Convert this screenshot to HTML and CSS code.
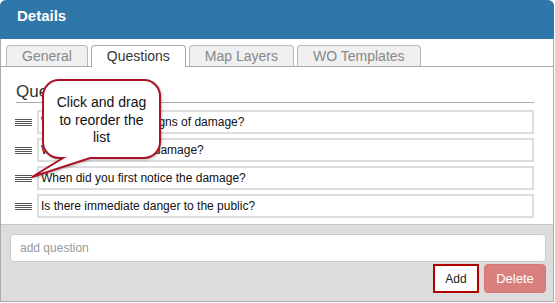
FILE: index.html
```html
<!DOCTYPE html>
<html lang="en">
<head>
    <meta charset="UTF-8">
    <meta name="viewport" content="width=device-width, initial-scale=1.0">
    <title>Details</title>
    <link rel="stylesheet" href="styles.css">
</head>
<body>
    <div class="panel">
        <div class="panel-header">Details</div>

        <div class="tabs">
            <div class="tab">General</div>
            <div class="tab active">Questions</div>
            <div class="tab">Map Layers</div>
            <div class="tab">WO Templates</div>
        </div>

        <div class="panel-body">
            <h3 class="section-title">Questions</h3>
            <ul class="question-list">
                <li class="question-row">
                    <span class="drag-handle"></span>
                    <div class="question-box">What are the visible signs of damage?</div>
                </li>
                <li class="question-row">
                    <span class="drag-handle"></span>
                    <div class="question-box">What is the extent of damage?</div>
                </li>
                <li class="question-row">
                    <span class="drag-handle"></span>
                    <div class="question-box">When did you first notice the damage?</div>
                </li>
                <li class="question-row">
                    <span class="drag-handle"></span>
                    <div class="question-box">Is there immediate danger to the public?</div>
                </li>
            </ul>
        </div>

        <div class="panel-footer">
            <input type="text" class="add-input" placeholder="add question">
            <div class="actions">
                <button class="btn btn-add">Add</button>
                <button class="btn btn-delete">Delete</button>
            </div>
        </div>

        <!-- tooltip callout -->
        <div class="callout">
            <svg width="135" height="105" viewBox="0 0 135 105">
                <path d="M29,4 H114 A16,16 0 0 1 130,20 V66 A16,16 0 0 1 114,82 H60 L2,101 L33,82 H29 A16,16 0 0 1 13,66 V20 A16,16 0 0 1 29,4 Z"
                      fill="#fff" stroke="#ad1326" stroke-width="2" stroke-linejoin="miter"/>
            </svg>
            <div class="callout-text">Click and drag<br>to reorder the<br>list</div>
        </div>
    </div>
</body>
</html>
```

FILE: styles.css
```css
body {
    font-family: 'Liberation Sans', Arial, sans-serif;
    margin: 0;
    padding: 0;
    background: #fff;
}

.panel {
    position: relative;
    width: 554px;
    box-sizing: border-box;
    border: 1px solid #aaa;
    border-top: none;
    border-radius: 6px 6px 0 0;
}

.panel-header {
    height: 39px;
    box-sizing: border-box;
    margin: 0 -1px;
    padding: 7px 17px 0;
    background: #2f76a9;
    color: #fff;
    font-size: 15px;
    font-weight: bold;
    line-height: 18px;
    border-radius: 6px 6px 0 0;
}

.tabs {
    display: flex;
    gap: 3px;
    padding: 6px 0 0 5px;
    border-bottom: 1px solid #aaa;
}

.tab {
    height: 21px;
    box-sizing: border-box;
    padding: 0 15px;
    border: 1px solid #b8b8b8;
    border-bottom: none;
    border-radius: 4px 4px 0 0;
    background: #f0f0f0;
    color: #888;
    font-size: 14px;
    line-height: 20px;
}

.tab.active {
    background: #fff;
    color: #333;
    border-color: #aaa;
    height: 22px;
    margin-bottom: -1px;
}

.panel-body {
    padding: 14px 19px 6px 15px;
}

.section-title {
    margin: 0;
    font-size: 17px;
    font-weight: normal;
    line-height: 21px;
    color: #333;
    border-bottom: 1px solid #aaa;
}

.question-list {
    list-style: none;
    margin: 7px 0 0;
    padding: 0;
    display: flex;
    flex-direction: column;
    gap: 4px;
}

.question-row {
    display: flex;
    align-items: center;
    gap: 5px;
}

.drag-handle {
    width: 17px;
    height: 7px;
    margin-left: -1px;
    background: repeating-linear-gradient(#555 0 1px, transparent 1px 2px);
}

.question-box {
    flex: 1;
    height: 24px;
    box-sizing: border-box;
    border: 2px solid #ddd;
    padding-left: 2px;
    font-size: 12px;
    line-height: 20px;
    color: #111;
}

.panel-footer {
    border-top: 1px solid #c6c6c6;
    background: #dddddd;
    padding: 9px 7px 8px 9px;
}

.add-input {
    display: block;
    width: 100%;
    height: 28px;
    box-sizing: border-box;
    border: 1px solid #ccc;
    border-radius: 4px;
    padding: 0 9px;
    font-family: 'Liberation Sans', Arial, sans-serif;
    font-size: 12px;
    background: #fff;
}

.add-input::placeholder {
    color: #999;
}

.actions {
    display: flex;
    justify-content: flex-end;
    gap: 5px;
    margin-top: 2px;
}

.btn {
    height: 29px;
    box-sizing: border-box;
    font-family: 'Liberation Sans', Arial, sans-serif;
    padding: 0;
}

.btn-add {
    width: 46px;
    border: 2px solid #b00000;
    background: #fff;
    color: #222;
    font-size: 12px;
}

.btn-delete {
    width: 62px;
    border: 1px solid #d47775;
    border-radius: 4px;
    background: #d9807e;
    color: #fff;
    font-size: 13px;
}

.callout {
    position: absolute;
    left: 29px;
    top: 76px;
    width: 135px;
    height: 105px;
}

.callout svg {
    display: block;
    filter: drop-shadow(1px 1px 1px rgba(0, 0, 0, 0.25));
}

.callout-text {
    position: absolute;
    left: 13px;
    top: 18px;
    width: 117px;
    text-align: center;
    font-size: 14px;
    line-height: 17.5px;
    color: #111;
}
```
